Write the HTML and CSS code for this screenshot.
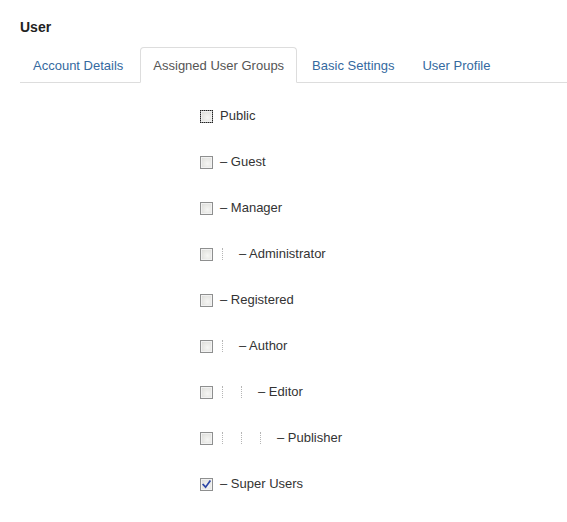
FILE: index.html
```html
<!DOCTYPE html>
<html lang="en">
<head>
<meta charset="utf-8">
<title>User</title>
<link rel="stylesheet" href="styles.css">
</head>
<body>
<div class="page">
  <h1 class="title">User</h1>
  <ul class="tabs">
    <li class="tab"><a href="#">Account Details</a></li>
    <li class="tab active"><a href="#">Assigned User Groups</a></li>
    <li class="tab"><a href="#">Basic Settings</a></li>
    <li class="tab"><a href="#">User Profile</a></li>
  </ul>
  <div class="groups">
    <div class="row"><span class="cb focus"></span><span class="label">Public</span></div>
    <div class="row"><span class="cb"></span><span class="label">– Guest</span></div>
    <div class="row"><span class="cb"></span><span class="label">– Manager</span></div>
    <div class="row"><span class="cb"></span><span class="label"><span class="gi"></span>– Administrator</span></div>
    <div class="row"><span class="cb"></span><span class="label">– Registered</span></div>
    <div class="row"><span class="cb"></span><span class="label"><span class="gi"></span>– Author</span></div>
    <div class="row"><span class="cb"></span><span class="label"><span class="gi"></span><span class="gi"></span>– Editor</span></div>
    <div class="row"><span class="cb"></span><span class="label"><span class="gi"></span><span class="gi"></span><span class="gi"></span>– Publisher</span></div>
    <div class="row"><span class="cb checked"><svg viewBox="0 0 11 11" width="11" height="11"><path d="M2.2 5.6 L4.6 8.2 L8.9 2.3" stroke="#2e47a6" stroke-width="1.7" fill="none" stroke-linecap="square"/></svg></span><span class="label">– Super Users</span></div>
  </div>
</div>
</body>
</html>
```
FILE: styles.css
```css
html, body {
  margin: 0;
  padding: 0;
  background: #fff;
}
body {
  font-family: "Liberation Sans", Arial, sans-serif;
  font-size: 13px;
  color: #333;
}
.page {
  padding: 17px 0 0 20px;
}
.title {
  margin: 0 0 10px 0;
  font-size: 14px;
  line-height: 20px;
  font-weight: bold;
  color: #222;
}
.tabs {
  display: flex;
  list-style: none;
  margin: 0;
  padding: 0;
  border-bottom: 1px solid #ddd;
}
.tab {
  margin: 0 2px -1px 0;
}
.tab a {
  display: block;
  padding: 9px 12px 7px;
  line-height: 18px;
  border: 1px solid transparent;
  border-radius: 4px 4px 0 0;
  color: #3469a0;
  text-decoration: none;
}
.tab:first-child a {
  padding-right: 14px;
}
.tab.active a {
  color: #555;
  background: #fff;
  border-color: #ddd #ddd transparent #ddd;
}
.groups {
  margin: 10px 0 0 180px;
}
.row {
  display: flex;
  align-items: center;
  height: 46px;
}
.cb {
  box-sizing: border-box;
  width: 13px;
  height: 13px;
  border: 1px solid #8e8f8f;
  background: radial-gradient(circle at 60% 60%, #f6f6f4 0%, #e2e2df 70%, #cfcfcc 100%);
  box-shadow: inset 0 0 0 1px #f2f2f2;
  display: flex;
  align-items: center;
  justify-content: center;
  flex: none;
}
.cb.focus {
  outline: 1px dotted #222;
  outline-offset: -1px;
}
.cb svg {
  display: block;
}
.label {
  margin-left: 7px;
  display: flex;
  align-items: center;
  line-height: 16px;
}
.gi {
  display: inline-block;
  width: 16px;
  height: 12px;
  margin-left: 2px;
  border-left: 1px dotted #b5b5b5;
}
```
